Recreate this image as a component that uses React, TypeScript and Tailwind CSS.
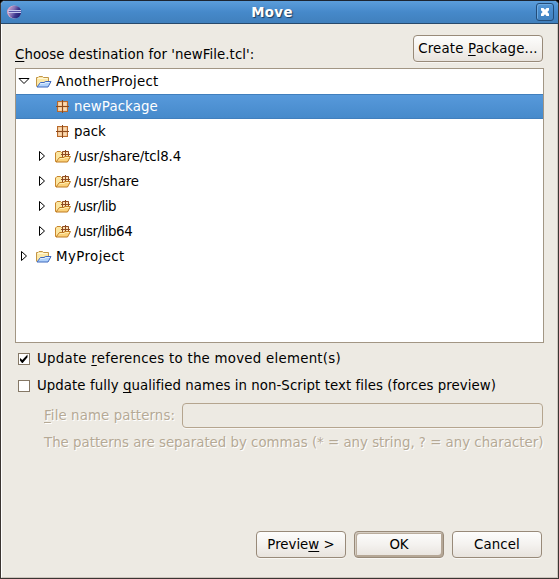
import React from "react";

function Mn({ children }: { children: React.ReactNode }) {
  return <span className="underline decoration-1 underline-offset-2 [text-decoration-skip-ink:none]">{children}</span>;
}

function EclipseIcon() {
  return (
    <svg width="16" height="16" viewBox="0 0 16 16">
      <defs>
        <linearGradient id="ecl" x1="0" x2="1" y1="0.2" y2="0.7">
          <stop offset="0" stopColor="#c79fcc" />
          <stop offset="0.35" stopColor="#8a76b8" />
          <stop offset="0.65" stopColor="#3c3890" />
          <stop offset="1" stopColor="#211c70" />
        </linearGradient>
      </defs>
      <ellipse cx="8" cy="8" rx="7" ry="6.5" fill="#d8a4c4" />
      <ellipse cx="8.8" cy="8" rx="6.4" ry="6.3" fill="url(#ecl)" />
      <path d="M2 6.5h13M2 8.5h13" stroke="#c4c8ee" />
      <path d="M3 7.5h12" stroke="#5553a6" />
    </svg>
  );
}

function ProjectIcon() {
  return (
    <svg width="17" height="13" viewBox="0 0 17 13" className="shrink-0">
      <path d="M1.5 11.5V2.5H3L4 1.5H7.5L8.5 2.5H13.5V7" fill="#fbe8a8" stroke="#c39545" />
      <path d="M2.5 3.5H12.5" stroke="#fff8d8" />
      <path d="M2 12L5.5 7.5H9L10.5 6.5H16L13 12Z" fill="#b0d2fb" stroke="#3f68bd" />
      <path d="M5 9L6 8.5H9.5L11 7.5H14.5" stroke="#e0effe" fill="none" />
    </svg>
  );
}

function PackageIcon() {
  return (
    <svg width="13" height="13" viewBox="0 0 13 13" className="shrink-0">
      <rect x="1.5" y="1.5" width="10" height="10" fill="#f0bd88" stroke="#b8692c" />
      <path d="M2.5 2.5h3v3h-3zM7.5 2.5h3v3h-3zM2.5 7.5h3v3h-3zM7.5 7.5h3v3h-3z" fill="#fadbb4" />
      <path d="M6.5 0v13M0 6.5h13" stroke="#8c4a1c" />
    </svg>
  );
}

function LibraryIcon() {
  return (
    <svg width="16" height="13" viewBox="0 0 16 13" className="shrink-0">
      <path d="M.5 11.5V3L2 1.5H5.5L6.5 2.5H12.5V11.5Z" fill="#fce6a0" stroke="#c9862c" />
      <path d="M7 1h7v6H7z" fill="#fbe0b4" />
      <path d="M7.5 7V1.5h6V7M10.5 0v7M6 4.5h9" fill="none" stroke="#8f4a20" />
      <path d="M1 12L4.5 7.5H9L9.5 6.5H15.5L12.5 12Z" fill="#fbd27a" stroke="#bf7a20" />
      <path d="M4 9.5L5 8.5H9.5L10.5 7.5H14" fill="none" stroke="#ffedb2" />
    </svg>
  );
}

function Arrow({ open }: { open?: boolean }) {
  return open ? (
    <svg width="13" height="11" viewBox="0 0 13 11" className="-mr-px shrink-0">
      <path d="M1 2.5H11L6 7.5Z" fill="white" stroke="black" />
    </svg>
  ) : (
    <svg width="12" height="11" viewBox="0 0 12 11" className="shrink-0">
      <path d="M3.5 .5V9.5L8.5 5Z" fill="white" stroke="black" />
    </svg>
  );
}

function LibRow({ label, className }: { label: string; className: string }) {
  return (
    <div className="flex h-[25px] items-center pl-[20px]">
      <Arrow />
      <span className="ml-[7px]"><LibraryIcon /></span>
      <span className={"ml-[3px] " + className}>{label}</span>
    </div>
  );
}

const button =
  "flex h-[27px] shrink-0 items-center justify-center rounded-[4px] border border-[#988a79] bg-linear-to-b from-[#fdfdfc] via-[#f4f2ef] to-[#e8e3dd]";

function Check({ checked }: { checked?: boolean }) {
  return (
    <svg width="12" height="12" viewBox="0 0 12 12" className="mr-[7px] shrink-0">
      <rect x=".5" y=".5" width="11" height="11" fill="white" stroke="#857866" />
      {checked && <path d="M2 5L4.3 7L9.5 1.5V4.3L4.7 10H4L2 7.5Z" fill="black" />}
    </svg>
  );
}

export default function App() {
  return (
    <div className="h-[579px] w-[559px] overflow-hidden bg-black font-['DejaVu_Sans','Liberation_Sans',sans-serif] text-[13.33px] leading-[17px] whitespace-pre text-black">
      <div className="flex h-[579px] flex-col overflow-hidden rounded-t-[5px] border border-[#3b3532] border-t-[#1c2430] bg-[#edeae3]">
        <div className="flex h-[23px] shrink-0 items-center border-b border-[#28496b] bg-linear-to-b from-[#5b9ddb] via-[#4689ca] to-[#4080bd] pr-[4px] pl-[5px]">
          <EclipseIcon />
          <div className="flex-1 pr-[14px] text-center font-bold tracking-[0.35px] text-white [text-shadow:1px_1px_1px_#1b3b5c]">Move</div>
          <div className="flex h-[18px] w-[18px] items-center justify-center rounded-[3px] border border-[#234c78] shadow-[inset_1px_1px_0_#6daae1]">
            <svg width="10" height="10" viewBox="0 0 10 10" className="shrink-0">
              <path d="M1 1H3.5L5 2.7L6.5 1H9V3.2L7.3 5L9 6.8V9H6.5L5 7.3L3.5 9H1V6.8L2.7 5L1 3.2Z" fill="white" />
            </svg>
          </div>
        </div>
        <div className="flex flex-1 flex-col border-r border-b border-l border-r-[#cdc5bd] border-b-[#cdc5bd] border-l-white pr-[13px] pl-[13px]">
          <div className="flex h-[44px] justify-between pt-[11px] pr-px">
            <div className="pt-[11px] tracking-[0.06px]"><Mn>C</Mn>hoose destination for 'newFile.tcl':</div>
            <div className={button + " w-[130px] tracking-[0.18px] shadow-[0_1px_0_#f8f6f3]"}><span>Create <Mn>P</Mn>ackage...</span></div>
          </div>
          <div className="h-[275px] w-[529px] shrink-0 border border-[#a29684] bg-white">
            <div className="flex h-[25px] items-center pl-[2px]">
              <Arrow open /><span className="ml-[5px]"><ProjectIcon /></span>
              <span className="ml-[4px] tracking-[0.28px]">AnotherProject</span>
            </div>
            <div className="flex h-[25px] items-center border-y border-t-[#417fbd] border-b-[#417fbd] bg-linear-to-b from-[#5799db] to-[#468acb] pl-[40px] text-white">
              <PackageIcon /><span className="ml-[5px] tracking-[0.1px]">newPackage</span>
            </div>
            <div className="flex h-[25px] items-center pl-[40px]">
              <PackageIcon /><span className="ml-[5px]">pack</span>
            </div>
            <LibRow label="/usr/share/tcl8.4" className="tracking-[-0.1px]" />
            <LibRow label="/usr/share" className="tracking-[-0.2px]" />
            <LibRow label="/usr/lib" className="tracking-[-0.45px]" />
            <LibRow label="/usr/lib64" className="tracking-[-0.45px]" />
            <div className="flex h-[25px] items-center pl-[2px]">
              <Arrow /><span className="ml-[5px]"><ProjectIcon /></span>
              <span className="ml-[4px] tracking-[0.42px]">MyProject</span>
            </div>
          </div>
          <div className="mt-[7px] flex h-[17px] items-center pl-[3px]">
            <Check checked /><span className="tracking-[0.26px]">Update <Mn>r</Mn>eferences to the moved element(s)</span>
          </div>
          <div className="mt-[10px] flex h-[17px] items-center pl-[3px]">
            <Check /><span className="tracking-[0.06px]">Update fully <Mn>q</Mn>ualified names in non-Script text files (forces preview)</span>
          </div>
          <div className="mt-[9px] flex h-[25px] items-center pl-[29px] text-[#b5a995] [text-shadow:1px_1px_0_white]">
            <span className="w-[138px] tracking-[0.11px]"><Mn>F</Mn>ile name patterns:</span>
            <div className="h-[25px] w-[361px] shrink-0 rounded-[4px] border border-[#b5a58f] bg-[#edeae3] shadow-[0_1px_0_#f8f6f3]" />
          </div>
          <div className="mt-[6px] pl-[29px] text-[#b5a995] [text-shadow:1px_1px_0_white]">
            The patterns are separated by commas (* = any string, ? = any character)
          </div>
          <div className="mt-[80px] flex gap-[8px] pl-[241px]">
            <div className={button + " w-[90px] shadow-[0_1px_0_#f8f6f3]"}><span>Previe<Mn>w</Mn> &gt;</span></div>
            <div className={button + " w-[90px] shadow-[inset_1px_1px_0_#d6cec3,inset_-1px_-1px_0_#b5a796,inset_2px_2px_0_#b9ac9c,inset_-2px_-2px_0_#b5a796,0_1px_0_#f8f6f3]"}>OK</div>
            <div className={button + " w-[90px] tracking-[0.1px] shadow-[0_1px_0_#f8f6f3]"}>Cancel</div>
          </div>
        </div>
      </div>
    </div>
  );
}
